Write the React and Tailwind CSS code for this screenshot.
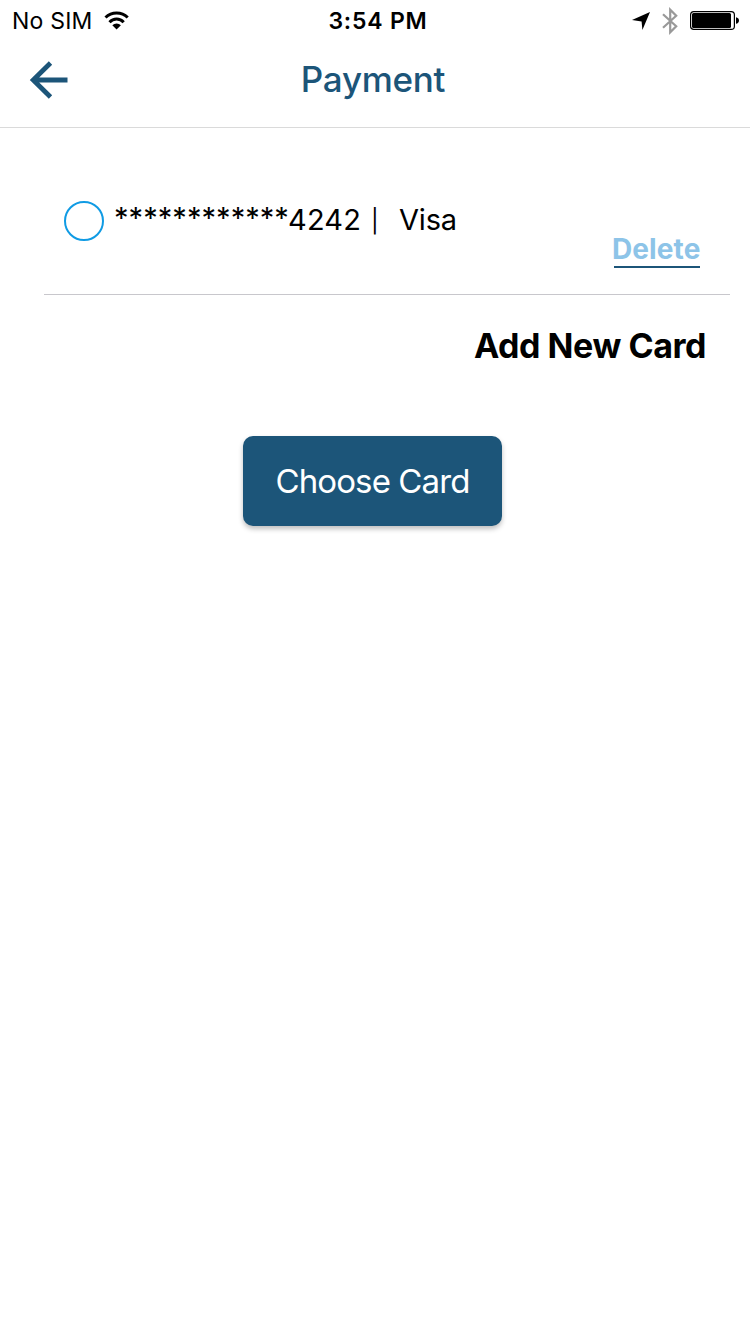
function WifiIcon() {
  return (
    <svg width="26" height="20" viewBox="0 0 26 20" fill="none" stroke="#000" strokeWidth="3">
      <path d="M1.500 6.500C4.500 3.500 8.500 1.900 12.600 1.900S20.700 3.500 23.700 6.500" />
      <path d="M5.500 11.200C7.400 9.200 9.800 8.100 12.600 8.100s5.200 1.100 7.100 3.100" />
      <path d="M12.600 18.600l-4.300-4.300a6 6 0 0 1 8.600 0z" fill="#000" stroke="none" />
    </svg>
  );
}

function LocationIcon() {
  return (
    <svg width="18" height="18" viewBox="0 0 18 18">
      <path d="M18 0L10.400 18 9.600 9.500 0 8z" fill="#000" />
    </svg>
  );
}

function BluetoothIcon() {
  return (
    <svg width="16" height="28" viewBox="0 0 16 28" fill="none" stroke="#999" strokeWidth="2.200">
      <path d="M1 7.200L14.200 19.300 8.200 25.300V2.700l6 6L1 20.800" />
    </svg>
  );
}

function BatteryIcon() {
  return (
    <svg width="50" height="20" viewBox="0 0 50 20">
      <rect x="0.600" y="0.600" width="43.800" height="17.800" rx="3.200" fill="none" stroke="#000" strokeWidth="1.200" />
      <rect x="2" y="2" width="39" height="15" rx="1.500" fill="#000" />
      <path d="M46 6.200c1.700.3 3 1.500 3 3.300s-1.300 3-3 3.300z" fill="#000" />
    </svg>
  );
}

function StatusBar() {
  return (
    <div className="grid h-[41px] grid-cols-3 items-center text-[23px] leading-[41px]">
      <div className="flex items-center pl-3">
        <span className="w-[92px] whitespace-nowrap pt-px tracking-[0.200px]">No SIM</span>
        <WifiIcon />
      </div>
      <div className="pl-[6px] pt-px text-center font-semibold tracking-[0.800px]">3:54 PM</div>
      <div className="flex items-center justify-end pr-[10px]">
        <LocationIcon />
        <span className="ml-3 mr-3"><BluetoothIcon /></span>
        <BatteryIcon />
      </div>
    </div>
  );
}

function Header() {
  return (
    <header className="grid h-[87px] grid-cols-[80px_1fr_80px] border-b border-[#dadada] text-[#1c5579]">
      <button className="flex items-start pl-[29px] pt-5" aria-label="Back">
        <svg width="40" height="38" viewBox="0 0 40 38" fill="none" stroke="currentColor" strokeWidth="4.800">
          <path d="M21.500 2L4.200 19l17.300 17M4 19h34.500" />
        </svg>
      </button>
      <h1 className="pr-[4px] pt-[13px] text-center text-[35px] font-medium leading-[50px] tracking-[-0.300px]">Payment</h1>
    </header>
  );
}

function CardRow() {
  return (
    <div className="flex h-[167px] items-start border-b border-[#c8c7cc] pl-5 pt-[73px]">
      <span className="size-10 shrink-0 rounded-full border-2 border-[#109be4]" />
      <div className="ml-[10px] flex text-[29px] leading-[37px]">
        <span className="w-[174px] whitespace-nowrap leading-[34px] tracking-[0.050px]">************</span>
        <span className="w-[83px] whitespace-nowrap tracking-[0.200px]">4242</span>
        <span className="w-[28px] text-[23px] leading-[40px]">|</span>
        <span className="tracking-[-0.200px]">Visa</span>
      </div>
      <button className="ml-auto mr-[30px] mt-8 w-[86px] border-b-2 border-[#1c5579] text-[28px] font-bold leading-[33px] text-[#8dc4e8]">
        <span className="-ml-[2px] block whitespace-nowrap tracking-[0.100px]">Delete</span>
      </button>
    </div>
  );
}

export default function App() {
  return (
    <div className="min-h-[1334px] bg-white font-['Inter',sans-serif] text-black">
      <StatusBar />
      <Header />
      <main className="flex flex-col pl-11 pr-5">
        <CardRow />
        <button className="mr-6 mt-[31px] self-end text-[34px] font-bold leading-10 tracking-[-0.450px]">Add New Card</button>
        <button className="ml-[199px] mt-[70px] h-[90px] w-[259px] rounded-[10px] bg-[#1c5579] text-[33px] leading-[91px] tracking-[-0.900px] text-white shadow-[0_3px_5px_rgba(0,0,0,0.25)]">
          Choose Card
        </button>
      </main>
    </div>
  );
}
